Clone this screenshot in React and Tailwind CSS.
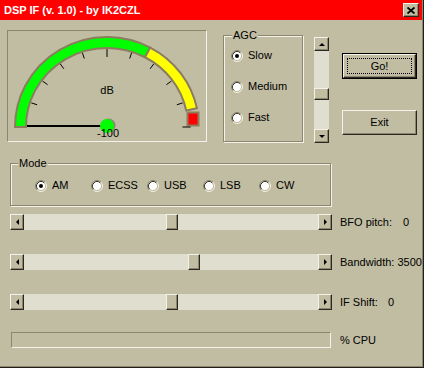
import React from "react";

const raised =
  "border border-t-[#f4f2e8] border-l-[#f4f2e8] border-r-[#2a2820] border-b-[#2a2820] shadow-[inset_-1px_-1px_0_#8c8670] bg-[#c1bda2]";
const etched =
  "border border-[#8c8670] shadow-[1px_1px_0_#f4f2e8,inset_1px_1px_0_#f4f2e8]";

const Arrow = ({ dir }) => {
  const d = {
    left: "M3 0L0 3L3 6Z",
    right: "M0 0L3 3L0 6Z",
    up: "M0 3L3 0L6 3Z",
    down: "M0 0L6 0L3 3Z",
  }[dir];
  const vertical = dir === "up" || dir === "down";
  return (
    <svg width={vertical ? 6 : 3} height={vertical ? 3 : 6} viewBox={vertical ? "0 0 6 3" : "0 0 3 6"}>
      <path d={d} fill="#000" />
    </svg>
  );
};

const Radio = ({ checked, label, className = "" }) => (
  <div className={`flex items-center gap-[5px] h-[13px] ${className}`}>
    <svg width="12" height="12" viewBox="0 0 12 12" className="shrink-0">
      <circle cx="6" cy="6" r="4.5" fill="#fff" />
      <path d="M2.11 9.89A5.5 5.5 0 0 1 9.89 2.11" fill="none" stroke="#8c8670" />
      <path d="M9.89 2.11A5.5 5.5 0 0 1 2.11 9.89" fill="none" stroke="#f4f2e8" />
      <path d="M2.82 9.18A4.5 4.5 0 0 1 9.18 2.82" fill="none" stroke="#3a3830" />
      <path d="M9.18 2.82A4.5 4.5 0 0 1 2.82 9.18" fill="none" stroke="#c1bda2" />
      {checked && <circle cx="6" cy="6" r="2" fill="#000" />}
    </svg>
    <span>{label}</span>
  </div>
);

const HScroll = ({ offset }) => (
  <div className="flex w-[322px] h-[16px] bg-[#e0decf]">
    <div className={`${raised} w-[14px] h-full flex items-center justify-center`}>
      <Arrow dir="left" />
    </div>
    <div className="flex-1 flex">
      <div className={offset} />
      <div className={`${raised} w-[12px] h-full`} />
    </div>
    <div className={`${raised} w-[14px] h-full flex items-center justify-center`}>
      <Arrow dir="right" />
    </div>
  </div>
);

// gauge geometry (svg coords, origin inside the meter panel)
const cx = 99;
const cy = 96;
const pt = (rx, ry, a) => {
  const r = (a * Math.PI) / 180;
  return `${(cx + rx * Math.cos(r)).toFixed(2)} ${(cy - ry * Math.sin(r)).toFixed(2)}`;
};
const seg = (a1, a2) =>
  `M${pt(92, 90, a1)}A92 90 0 0 1 ${pt(92, 90, a2)}L${pt(81, 79, a2)}A81 79 0 0 0 ${pt(81, 79, a1)}Z`;

const ticks = [0, 18, 36, 54, 72, 90, 108, 126, 144, 162].map((a) => {
  const r = (a * Math.PI) / 180;
  const [r1, r2] = a === 90 ? [70, 78] : a === 0 ? [74, 82] : [72, 78];
  return {
    x1: cx + r1 * 1.02 * Math.cos(r),
    y1: cy - r1 * Math.sin(r),
    x2: cx + r2 * 1.02 * Math.cos(r),
    y2: cy - r2 * Math.sin(r),
  };
});

const Meter = () => (
  <div className="relative w-[200px] h-[112px] border border-t-[#8c8670] border-l-[#8c8670] border-b-[#f4f2e8] border-r-[#f4f2e8]">
    <svg className="absolute inset-0" width="198" height="110" viewBox="0 0 198 110">
      <path d={seg(180, 62)} fill="#00ff00" stroke="#8b7d5e" strokeWidth="2" />
      <path d={seg(62, 12)} fill="#ffff00" stroke="#8b7d5e" strokeWidth="2" />
      <rect x="179.5" y="81.5" width="11" height="13" fill="#ff0000" stroke="#8b7d5e" strokeWidth="2" />
      {ticks.map((t, i) => (
        <line key={i} {...t} stroke="#000" strokeWidth="1" />
      ))}
      <line x1="19" y1="95" x2="93" y2="95" stroke="#000" strokeWidth="2" />
      <circle cx="100.5" cy="94.5" r="7" fill="#8c8670" />
      <circle cx="99" cy="95" r="7" fill="#00ff00" />
    </svg>
    <span className="absolute left-[99px] top-[59px] -translate-x-1/2 -translate-y-1/2">dB</span>
    <span className="absolute left-[100px] top-[102px] -translate-x-1/2 -translate-y-1/2">-100</span>
  </div>
);

export default function App() {
  return (
    <div className="w-[424px] h-[368px] bg-[#c1bda2] flex flex-col border-r border-b border-r-[#202018] border-b-[#202018] shadow-[inset_-1px_-1px_0_#8c8670] font-['Liberation_Sans',Arial,sans-serif] text-[11px] leading-[13px] text-black overflow-hidden">
      {/* title bar */}
      <div className="h-[20px] bg-[#ff0000] flex items-center justify-between pl-[4px] pr-[3px] mr-[1px]">
        <span className="text-white font-bold">DSP IF (v. 1.0) - by IK2CZL</span>
        <div className={`${raised} w-[16px] h-[14px] flex items-center justify-center`}>
          <svg width="8" height="7" viewBox="0 0 8 7">
            <path d="M0.5 0.5L7.5 6.5M7.5 0.5L0.5 6.5" stroke="#000" strokeWidth="1.8" />
          </svg>
        </div>
      </div>

      {/* top row */}
      <div className="flex items-start pl-[7px] mt-[10px]">
        <Meter />

        <div className={`relative ml-[16px] mt-[5px] w-[80px] h-[107px] ${etched} flex flex-col gap-[18px] pt-[13px] pl-[7px]`}>
          <span className="absolute left-[8px] -top-[7px] bg-[#c1bda2] px-[1px]">AGC</span>
          <Radio checked label="Slow" />
          <Radio label="Medium" />
          <Radio label="Fast" />
        </div>

        <div className="ml-[11px] mt-[7px] w-[15px] h-[106px] flex flex-col bg-[#e0decf]">
          <div className={`${raised} h-[14px] flex items-center justify-center`}>
            <Arrow dir="up" />
          </div>
          <div className="flex-1 flex flex-col">
            <div className="h-[37px]" />
            <div className={`${raised} h-[12px]`} />
          </div>
          <div className={`${raised} h-[14px] flex items-center justify-center`}>
            <Arrow dir="down" />
          </div>
        </div>

        <div className="ml-[13px] flex flex-col">
          <div className="mt-[23px] w-[75px] h-[26px] border border-black">
            <div className={`${raised} w-full h-full p-[3px]`}>
              <div className="w-full h-full border border-dotted border-black flex items-center justify-center">
                Go!
              </div>
            </div>
          </div>
          <div className={`${raised} mt-[31px] w-[75px] h-[25px] flex items-center justify-center`}>Exit</div>
        </div>
      </div>

      {/* mode */}
      <div className={`relative ml-[10px] mt-[20px] w-[321px] h-[43px] ${etched} flex pt-[15px] pl-[24px]`}>
        <span className="absolute left-[7px] -top-[7px] bg-[#c1bda2] px-[1px]">Mode</span>
        <Radio checked label="AM" className="w-[56px]" />
        <Radio label="ECSS" className="w-[56px]" />
        <Radio label="USB" className="w-[56px]" />
        <Radio label="LSB" className="w-[56px]" />
        <Radio label="CW" className="w-[56px]" />
      </div>

      {/* sliders */}
      <div className="flex items-center ml-[10px] mt-[8px]">
        <HScroll offset="w-[142px]" />
        <span className="ml-[8px] w-[63px]">BFO pitch:</span>
        <span>0</span>
      </div>
      <div className="flex items-center ml-[10px] mt-[24px]">
        <HScroll offset="w-[164px]" />
        <span className="ml-[8px]">Bandwidth: 3500</span>
      </div>
      <div className="flex items-center ml-[10px] mt-[24px]">
        <HScroll offset="w-[142px]" />
        <span className="ml-[8px] w-[48px]">IF Shift:</span>
        <span>0</span>
      </div>

      {/* cpu */}
      <div className="flex items-center ml-[11px] mt-[22px]">
        <div className="w-[320px] h-[16px] border border-t-[#8c8670] border-l-[#8c8670] border-b-[#f4f2e8] border-r-[#f4f2e8]" />
        <span className="ml-[9px]">% CPU</span>
      </div>
    </div>
  );
}
